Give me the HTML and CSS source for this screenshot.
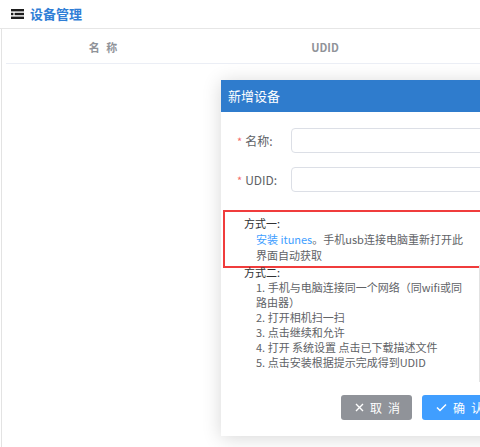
FILE: index.html
```html
<!DOCTYPE html>
<html lang="zh-CN">
<head>
<meta charset="utf-8">
<title>设备管理</title>
<link rel="stylesheet" href="styles.css">
</head>
<body>
<div class="page">
  <header class="topbar">
    <svg class="menu-icon" width="13" height="10" viewBox="0 0 13 10">
      <rect x="0" y="0" width="13" height="2.4" fill="#1d1d1d"/>
      <rect x="0" y="3.8" width="2.4" height="2.4" fill="#1d1d1d"/>
      <rect x="3.6" y="3.8" width="9.4" height="2.4" fill="#1d1d1d"/>
      <rect x="0" y="7.6" width="13" height="2.4" fill="#1d1d1d"/>
    </svg>
    <span class="title">设备管理</span>
  </header>
  <main class="content">
    <div class="table-head">
      <div class="th c1">名 称</div>
      <div class="th c2">UDID</div>
      <div class="th c3"></div>
    </div>
  </main>
</div>

<div class="dialog">
  <div class="dlg-head">新增设备</div>
  <div class="dlg-body">
    <div class="form-row">
      <label class="form-label"><span class="req">*</span>名称:</label>
      <div class="input"></div>
    </div>
    <div class="form-row last">
      <label class="form-label"><span class="req">*</span>UDID:</label>
      <div class="input"></div>
    </div>
    <div class="method method-one">
      <div class="method-title">方式一:</div>
      <div class="method-text"><a class="link">安装 itunes</a>。手机usb连接电脑重新打开此界面自动获取</div>
    </div>
    <div class="method method-two">
      <div class="method-title">方式二:</div>
      <ul class="steps">
        <li>1. 手机与电脑连接同一个网络（同wifi或同路由器）</li>
        <li>2. 打开相机扫一扫</li>
        <li>3. 点击继续和允许</li>
        <li>4. 打开 系统设置 点击已下载描述文件</li>
        <li>5. 点击安装根据提示完成得到UDID</li>
      </ul>
    </div>
    <div class="qr"></div>
  </div>
  <div class="dlg-foot">
    <button class="btn btn-cancel">
      <svg width="9" height="9" viewBox="0 0 9 9"><path d="M1 1L8 8M8 1L1 8" stroke="#fff" stroke-width="1.4" fill="none"/></svg>
      <span class="btn-text">取消</span>
    </button>
    <button class="btn btn-ok">
      <svg width="11" height="9" viewBox="0 0 11 9"><path d="M1 4.5L4 7.5L10 1.5" stroke="#fff" stroke-width="1.5" fill="none"/></svg>
      <span class="btn-text">确认</span>
    </button>
  </div>
</div>
</body>
</html>
```

FILE: styles.css
```css
html, body {
  margin: 0;
  padding: 0;
  width: 480px;
  height: 447px;
  overflow: hidden;
  background: #fff;
  font-family: "Noto Sans CJK SC", "Noto Sans", sans-serif;
}

.page {
  height: 447px;
  display: flex;
  flex-direction: column;
}

.topbar {
  height: 28px;
  border-bottom: 1px solid #e6e6e6;
  display: flex;
  align-items: center;
  padding-left: 11px;
  gap: 6px;
}

.menu-icon { display: block; }

.title {
  font-size: 13px;
  font-weight: bold;
  color: #2f7ed6;
  line-height: 16px;
}

.content {
  flex: 1;
  margin-left: 1px;
  border-left: 1px solid #e3e3e3;
  padding-left: 4px;
}

.table-head {
  display: flex;
  height: 35px;
  border-bottom: 1px solid #ebeef5;
  align-items: center;
  padding-top: 2px;
  box-sizing: border-box;
}

.th {
  font-size: 11px;
  font-weight: bold;
  color: #909399;
  text-align: center;
  line-height: 14px;
}
.c1 { width: 196px; letter-spacing: 2px; }
.c2 { width: 246px; }
.c3 { flex: 1; }

.dialog {
  position: absolute;
  left: 221px;
  top: 80px;
  width: 330px;
  background: #fff;
  box-shadow: 0 2px 18px rgba(0, 0, 0, 0.16);
}

.dlg-head {
  height: 32px;
  background: #2f7ccd;
  color: #fff;
  font-size: 13px;
  line-height: 32px;
  padding-left: 7px;
}

.dlg-body {
  position: relative;
  padding-top: 16px;
}

.form-row {
  display: flex;
  align-items: center;
  height: 25px;
  margin-bottom: 14px;
}
.form-row.last { margin-bottom: 18px; }

.form-label {
  width: 70px;
  box-sizing: border-box;
  padding-left: 16px;
  font-size: 12px;
  color: #606266;
  line-height: 16px;
}

.req {
  color: #f56c6c;
  margin-right: 3px;
  font-size: 11px;
}

.input {
  flex: 1;
  height: 25px;
  box-sizing: border-box;
  border: 1px solid #dcdfe6;
  border-radius: 4px;
  background: #fff;
}

.method {
  font-size: 11px;
  color: #606266;
}

.method-title {
  color: #303133;
  line-height: 16px;
}

.method-one {
  margin-left: 2px;
  border: 2px solid #f03c3c;
  padding: 3px 0 3px 19px;
}

.method-text {
  padding-left: 12px;
  width: 212px;
  line-height: 16px;
}

.link {
  color: #409eff;
}

.method-two {
  margin-top: -4px;
  padding-left: 23px;
}

.steps {
  list-style: none;
  margin: 0;
  padding-left: 12px;
  width: 212px;
  line-height: 15px;
}

.qr {
  position: absolute;
  left: 258px;
  top: 153px;
  width: 100px;
  height: 117px;
  border-left: 1px solid #e2e2e2;
}

.dlg-foot {
  display: flex;
  gap: 10px;
  padding: 25px 0 16px 120px;
}

.btn {
  height: 25px;
  border: none;
  border-radius: 3px;
  color: #fff;
  font-family: inherit;
  font-size: 12px;
  display: flex;
  align-items: center;
  padding: 0 0 0 14px;
  gap: 6px;
}

.btn-cancel {
  width: 71px;
  background: #909399;
}

.btn-ok {
  width: 90px;
  background: #409eff;
}

.btn-text {
  letter-spacing: 6px;
  line-height: 16px;
}
```
